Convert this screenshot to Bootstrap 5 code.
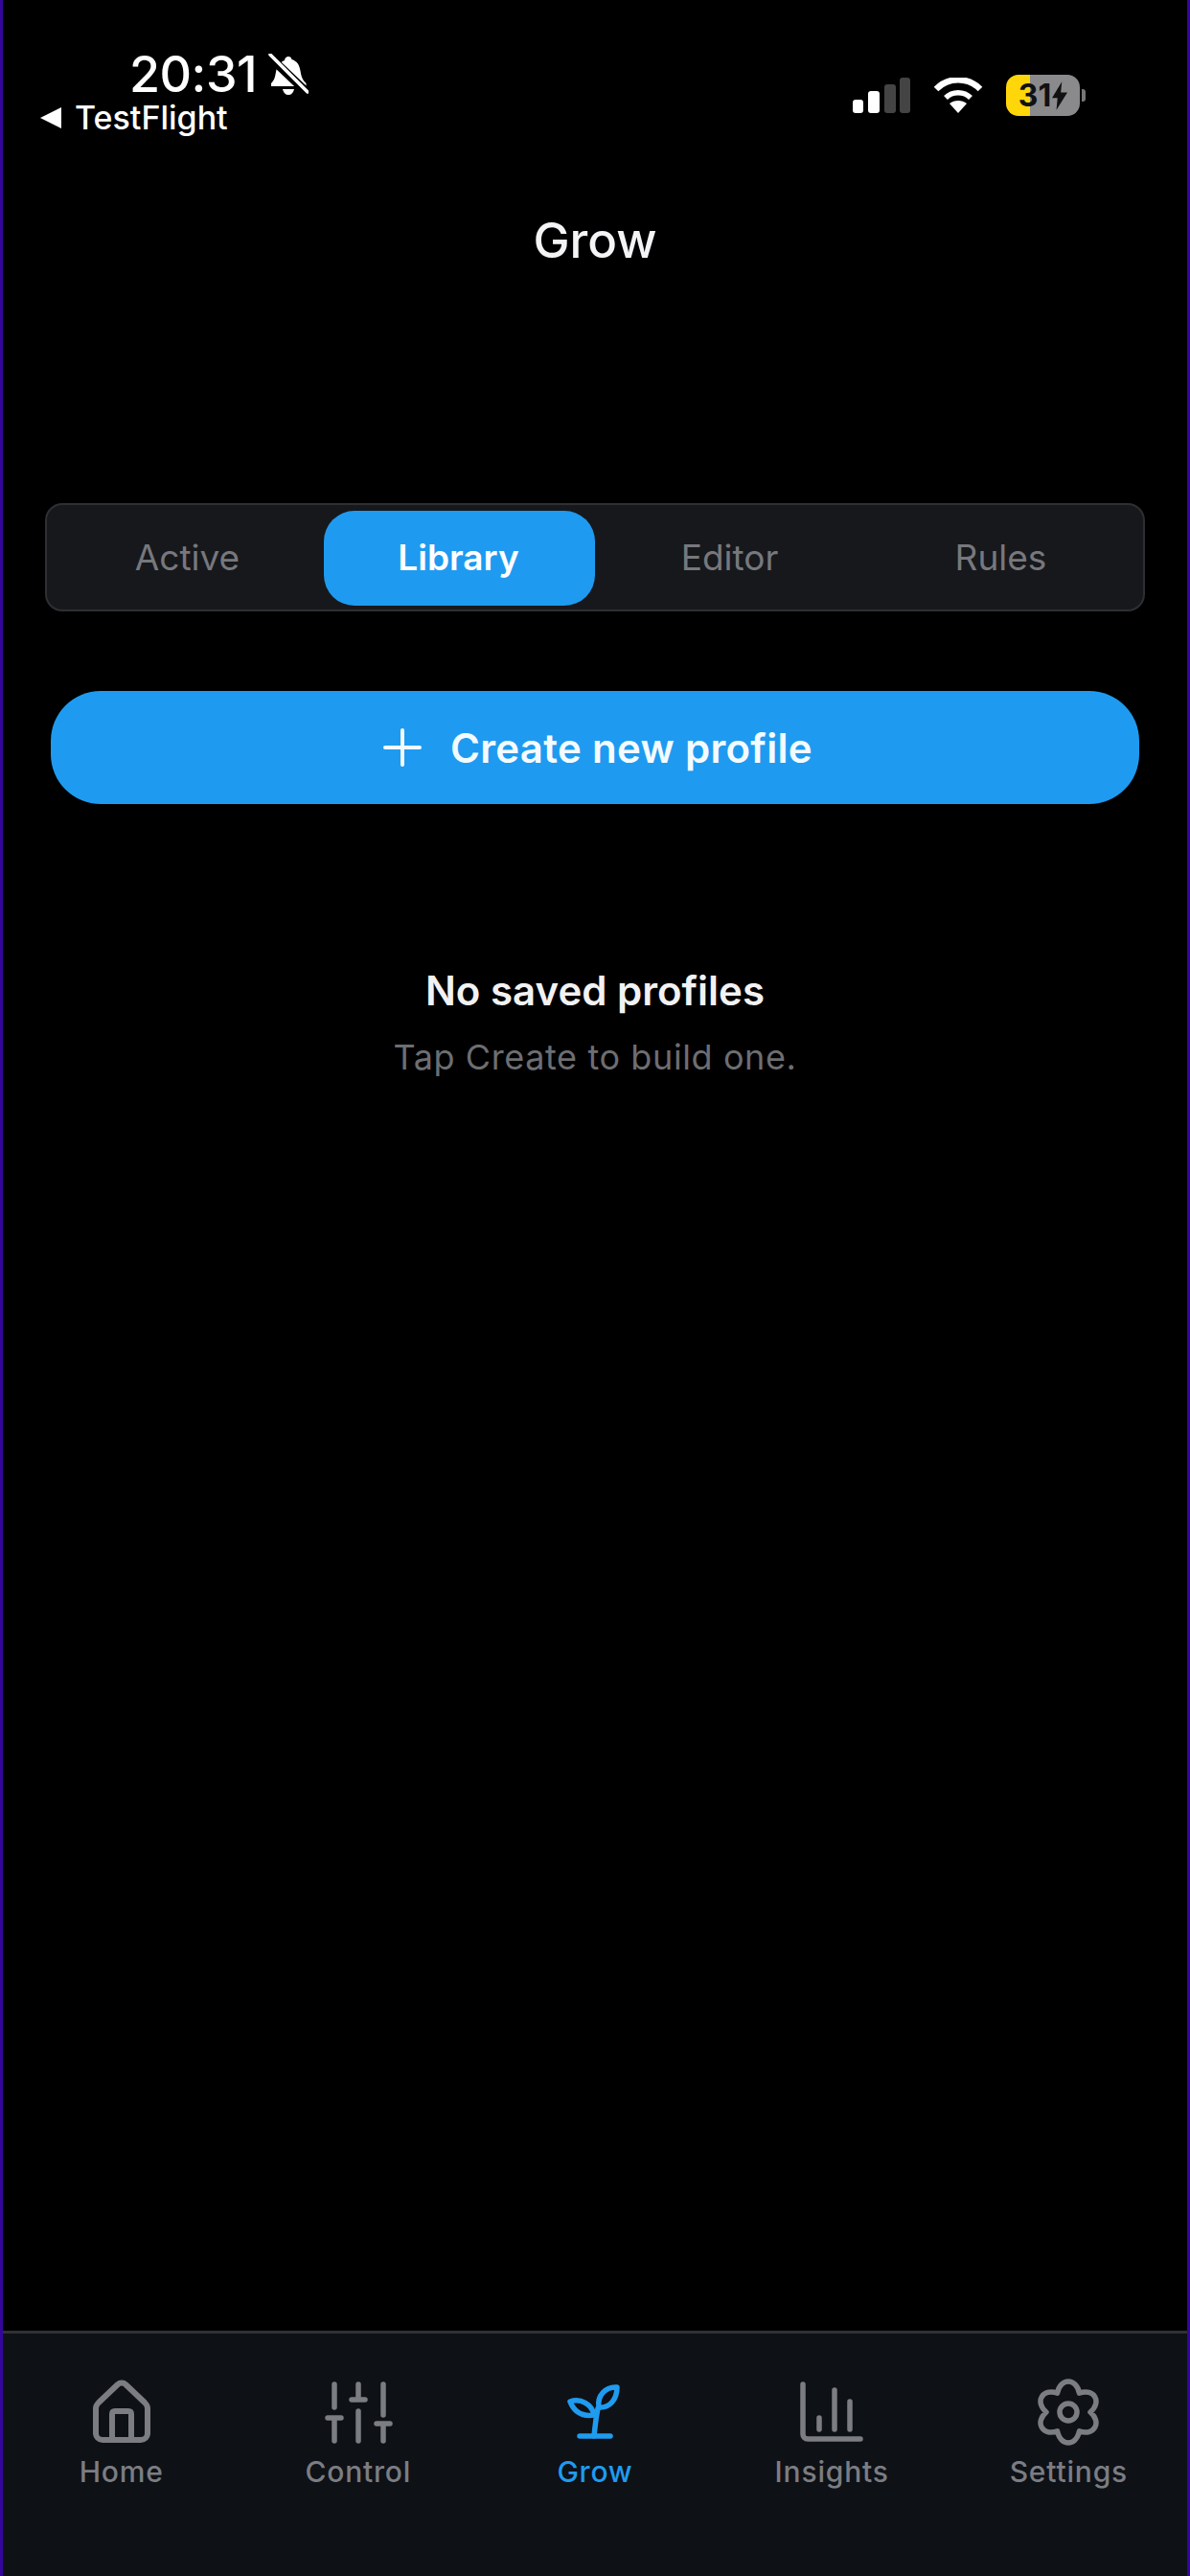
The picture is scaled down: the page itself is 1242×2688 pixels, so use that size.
<!DOCTYPE html>
<html lang="en">
<head>
<meta charset="utf-8">
<title>Grow</title>
<link href="https://cdn.jsdelivr.net/npm/bootstrap@5.3.0/dist/css/bootstrap.min.css" rel="stylesheet">
<style>
html,body{height:100%;}
body{background:#34069a;font-family:Inter,"Liberation Sans",sans-serif;color:#f2f2f4;padding:0 3px;}
.app-frame{height:2688px;background:#000;}
.status-row{height:140px;padding:54px 106px 0 38px;}
.status-left{width:300px;}
.clock-line{padding-left:94px;height:48px;gap:12px;}
.clock{font-size:52px;font-weight:500;line-height:48px;color:#fff;letter-spacing:-.5px;}
.back-line{gap:13px;height:38px;padding-top:4px;}
.back-label{font-size:34px;font-weight:500;line-height:36px;color:#fff;}
.status-right{gap:24px;padding-top:24px;}
.battery-shell{width:77px;height:43px;border-radius:13px;background:linear-gradient(90deg,#ffd60a 0 33%,#8a8a8c 33% 100%);color:#111;font-size:32px;font-weight:700;line-height:43px;gap:1px;overflow:hidden;}
.battery-tip{width:4px;height:13px;border-radius:0 3px 3px 0;background:#77777a;margin-left:2px;}
.page-title{font-size:51px;font-weight:500;line-height:60px;margin:81px 0 0;text-align:center;color:#f4f4f6;}
.seg-bar{margin:244px 0 0 44px;width:1148px;height:113px;background:#17181c;border:2px solid #2e2f33;border-radius:18px;padding:6px;}
.seg-item{height:99px;font-size:37px;color:#77787d;border-radius:32px;font-weight:400;padding:0 2px 2px 0;}
.seg-item.is-on{background:#1e9bf0;color:#fff;font-weight:600;}
.make-btn{display:flex;margin:83px 0 0 50px;width:1136px;height:118px;border-radius:52px;background:#1e9bf0;border:0;color:#f4fbff;font-size:42px;font-weight:600;letter-spacing:.3px;gap:30px;padding-left:18px;}
.make-btn:hover{background:#1e9bf0;color:#f4fbff;}
.empty-box{margin-top:170px;text-align:center;}
.empty-head{font-size:42px;font-weight:600;line-height:50px;color:#f2f2f4;margin:0;}
.empty-note{font-size:36px;line-height:44px;color:#6d6e72;margin:22px 0 0;letter-spacing:.6px;}
.tab-strip{height:256px;background:#0e1116;border-top:3px solid #2f3135;padding-top:47px;}
.tab-slot{width:20%;color:#7b7d82;}
.tab-slot svg{display:block;height:70px;width:72px;}
.tab-slot.is-on{color:#1f9bef;}
.tab-name{font-size:30px;font-weight:500;line-height:36px;margin-top:9px;letter-spacing:.8px;}
</style>
</head>
<body>
<div class="app-frame d-flex flex-column">
  <div class="status-row d-flex justify-content-between">
    <div class="status-left">
      <div class="clock-line d-flex align-items-center">
        <span class="clock">20:31</span>
        <svg width="42" height="44" viewBox="0 0 42 44" aria-hidden="true"><path d="M21 3c2 0 3 1 3.500 3 6 2 8 6 9 12 1 6 2 9 6 13v3H3v-3c3-3 4-6 5-12 1-6 4-10 9-12 .5-3 2-4 4-4z" fill="#fff"/><path d="M15 37h12c-1 4-3 6-6 6s-5-2-6-6z" fill="#fff"/><path d="M1 3l40 38" stroke="#000" stroke-width="9"/><path d="M2 1l39 39" stroke="#fff" stroke-width="3.500" stroke-linecap="round"/></svg>
      </div>
      <div class="back-line d-flex align-items-center">
        <svg width="24" height="24" viewBox="0 0 24 24" aria-hidden="true"><path d="M23 1v22L1 12z" fill="#fff"/></svg>
        <span class="back-label">TestFlight</span>
      </div>
    </div>
    <div class="status-right d-flex align-items-center align-self-start">
      <svg width="60" height="38" viewBox="0 0 60 38" aria-hidden="true"><rect x="0" y="23" width="11" height="14" rx="3" fill="#fff"/><rect x="16" y="14" width="12" height="23" rx="3" fill="#fff"/><rect x="33" y="7" width="12" height="30" rx="3" fill="#444"/><rect x="49" y="0" width="11" height="37" rx="3" fill="#444"/></svg>
      <svg width="52" height="38" viewBox="0 0 52 38" aria-hidden="true"><path d="M26 37l-9-10c5-4 13-4 18 0z" fill="#fff"/><path d="M13 21c7-7 19-7 26 0" fill="none" stroke="#fff" stroke-width="5.500"/><path d="M3 12c13-13 33-13 46 0" fill="none" stroke="#fff" stroke-width="6.500"/></svg>
      <div class="d-flex align-items-center">
        <div class="battery-shell d-flex align-items-center justify-content-center"><span>31</span><svg width="16" height="30" viewBox="0 0 14 26" aria-hidden="true"><path d="M9 0L0 15h5l-1 11 10-16H8z" fill="#111"/></svg></div>
        <div class="battery-tip"></div>
      </div>
    </div>
  </div>
  <h1 class="page-title">Grow</h1>
  <div class="seg-bar d-flex">
    <div class="seg-item flex-fill d-flex align-items-center justify-content-center w-25">Active</div>
    <div class="seg-item is-on flex-fill d-flex align-items-center justify-content-center w-25">Library</div>
    <div class="seg-item flex-fill d-flex align-items-center justify-content-center w-25">Editor</div>
    <div class="seg-item flex-fill d-flex align-items-center justify-content-center w-25">Rules</div>
  </div>
  <button type="button" class="btn make-btn align-items-center justify-content-center">
    <svg width="40" height="40" viewBox="0 0 40 40" aria-hidden="true"><path d="M20 2v36M2 20h36" stroke="currentColor" stroke-width="4" stroke-linecap="round"/></svg>
    <span>Create new profile</span>
  </button>
  <div class="empty-box">
    <p class="empty-head">No saved profiles</p>
    <p class="empty-note">Tap Create to build one.</p>
  </div>
  <nav class="tab-strip d-flex mt-auto">
    <div class="tab-slot d-flex flex-column align-items-center">
      <svg viewBox="0 0 72 70" fill="none" stroke="currentColor" stroke-width="6" stroke-linejoin="round" stroke-linecap="round" aria-hidden="true"><path d="M9 31c0-2 1-4 3-6L32 6c2-2 6-2 8 0l20 19c2 2 3 4 3 6v26c0 4-3 7-7 7H16c-4 0-7-3-7-7z"/><path d="M26 64V37c0-2 1-3 3-3h14c2 0 3 1 3 3v27"/></svg>
      <span class="tab-name">Home</span>
    </div>
    <div class="tab-slot d-flex flex-column align-items-center">
      <svg viewBox="0 0 72 70" fill="none" stroke="currentColor" stroke-width="5.500" stroke-linecap="round" aria-hidden="true"><path d="M11 6v24M11 41v24M36 6v16M36 34v31M62 6v32M62 47v18M4 41h14M29 22h14M55 47h14"/></svg>
      <span class="tab-name">Control</span>
    </div>
    <div class="tab-slot is-on d-flex flex-column align-items-center">
      <svg viewBox="0 0 72 70" fill="none" stroke="currentColor" stroke-width="5.500" stroke-linecap="round" stroke-linejoin="round" aria-hidden="true"><path d="M20 60h32"/><path d="M35 60c1-8 1-14 4-29"/><path d="M10 24c11-4 23 3 25 14-13 2-21-4-25-14z"/><path d="M59 9C47 8 38 18 40 30c11 1 19-8 19-21z"/></svg>
      <span class="tab-name">Grow</span>
    </div>
    <div class="tab-slot d-flex flex-column align-items-center">
      <svg viewBox="0 0 72 70" fill="none" stroke="currentColor" stroke-width="5.500" stroke-linecap="round" stroke-linejoin="round" aria-hidden="true"><path d="M6 6v52c0 3 2 5 5 5h55"/><path d="M23 41v12M39 12v41M55 24v29"/></svg>
      <span class="tab-name">Insights</span>
    </div>
    <div class="tab-slot d-flex flex-column align-items-center">
      <svg viewBox="0 0 72 70" fill="none" stroke="currentColor" stroke-width="5.500" stroke-linecap="round" stroke-linejoin="round" aria-hidden="true"><circle cx="36" cy="35" r="9"/><path d="M24.500 15.100C27.700-1 44.300-1 47.500 15.100 63.100 9.800 71.400 24.200 59 35c12.400 10.800 4.100 25.200-11.500 19.900C44.300 71 27.700 71 24.500 54.900 8.900 60.200.6 45.800 13 35 .6 24.200 8.900 9.800 24.500 15.100z"/></svg>
      <span class="tab-name">Settings</span>
    </div>
  </nav>
</div>
<script src="https://cdn.jsdelivr.net/npm/bootstrap@5.3.0/dist/js/bootstrap.bundle.min.js"></script>
</body>
</html>
